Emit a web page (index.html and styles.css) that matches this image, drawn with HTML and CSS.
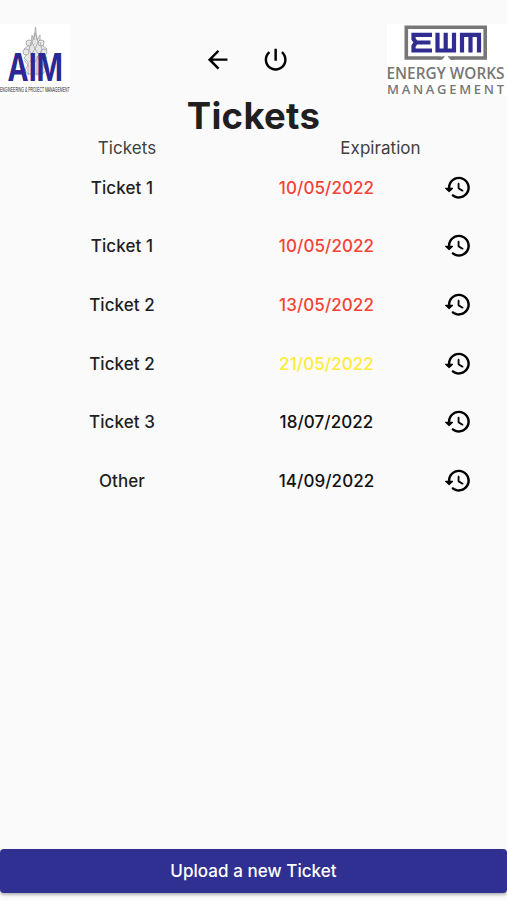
FILE: index.html
```html
<!DOCTYPE html>
<html lang="en">
<head>
<meta charset="utf-8">
<title>Tickets</title>
<link rel="stylesheet" href="styles.css">
</head>
<body>
<svg class="defs" width="0" height="0" aria-hidden="true">
  <symbol id="history" viewBox="0 0 24 24"><path d="M13.26 3C8.17 2.86 4 6.95 4 12H2.21c-.45 0-.67.54-.35.85l2.79 2.8c.2.2.51.2.71 0l2.79-2.8c.31-.31.09-.85-.36-.85H6c0-3.9 3.18-7.05 7.1-7 3.72.05 6.85 3.18 6.9 6.9.05 3.91-3.1 7.1-7 7.1-1.61 0-3.1-.55-4.28-1.48-.4-.31-.96-.28-1.32.08-.42.42-.39 1.13.08 1.49C9 20.29 10.91 21 13 21c5.05 0 9.14-4.17 9-9.26-.13-4.69-4.05-8.61-8.74-8.74zm-.51 5c-.41 0-.75.34-.75.75v3.68c0 .35.19.68.49.86l3.12 1.85c.36.21.82.09 1.03-.26.21-.36.09-.82-.26-1.03l-2.88-1.71v-3.4c0-.4-.34-.74-.75-.74z"/></symbol>
</svg>
<div class="screen">
  <header class="top">
    <svg class="logo-aim" viewBox="0 0 72 72" role="img" aria-label="AIM">
      <rect width="70" height="72" fill="#fff"/>
      <g fill="#e6e6e6" stroke="#999" stroke-width=".7">
        <path d="M28 50V38l-4-4 3-4-3-5 4-3-1-5 4 1 1-7 2 5 1.500-13 1.500 13 3-5 0 7 4-1-1 5 4 3-3 5 3 4-4 4v12z"/>
        <circle cx="29" cy="19" r="3"/><circle cx="41" cy="19" r="3"/>
        <circle cx="26" cy="28" r="3"/><circle cx="44" cy="28" r="3"/>
        <path d="M35 9l-3 9 3 7 3-7zM35 25l-4 6 4 7 4-7zM31 18l-2 8 4 6M40 18l2 8-4 6M30 38l4-6v20M41 38l-4-6v20M24 36l4 5-3 5 4 5M47 36l-4 5 3 5-4 5" fill="none"/>
      </g>
      <text class="aim-name" transform="translate(7.500 56.500) scale(.745 1)">AIM</text>
      <text class="aim-sub" x="0" y="68" textLength="69.500" lengthAdjust="spacingAndGlyphs">ENGINEERING &amp; PROJECT MANAGEMENT</text>
    </svg>
    <nav class="actions">
      <svg class="icon" viewBox="0 0 24 24"><path d="M20 11H7.83l5.59-5.59L12 4l-8 8 8 8 1.41-1.41L7.83 13H20v-2z"/></svg>
      <svg class="icon" viewBox="0 0 24 24"><path d="M13 3h-2v10h2V3zm4.83 2.17l-1.42 1.42C17.99 7.86 19 9.81 19 12c0 3.87-3.13 7-7 7s-7-3.13-7-7c0-2.19 1.01-4.14 2.58-5.42L6.17 5.17C4.23 6.82 3 9.26 3 12c0 4.97 4.03 9 9 9s9-4.03 9-9c0-2.74-1.23-5.18-3.17-6.83z"/></svg>
    </nav>
    <svg class="logo-ewm" viewBox="0 0 120 72" role="img" aria-label="EWM">
      <rect width="120" height="72" fill="#fff"/>
      <path d="M54 34H19.300V3.200H98.200V34H64" fill="none" stroke="#777" stroke-width="3.600"/>
      <path d="M50.500 35.800L55 32.200H58L55 35.800zM68 35.800L63.500 32.200H60.500L63.500 35.800z" fill="#777"/>
      <g fill="none" stroke="#302c92" stroke-width="4.200">
        <path d="M45 10.800H26.500V15L29 18.500L26.500 22V26.500H45M27 18.500H43.500"/>
        <path d="M50.500 8.700V26.500H67V8.700M58.700 8.700V26.500"/>
        <path d="M75 28.600V10.800H92V28.600M83.500 10.800V28.600"/>
      </g>
      <text class="ewm-name" x="-.5" y="54.500" textLength="118" lengthAdjust="spacingAndGlyphs">ENERGY WORKS</text>
      <text class="ewm-sub" x="0" y="69.500" textLength="117">MANAGEMENT</text>
    </svg>
  </header>
  <h1 class="title">Tickets</h1>
  <div class="heads"><span>Tickets</span><span>Expiration</span></div>
  <main class="list">
    <div class="row"><span class="name">Ticket 1</span><span class="date expired">10/05/2022</span><svg class="icon"><use href="#history"/></svg></div>
    <div class="row"><span class="name">Ticket 1</span><span class="date expired">10/05/2022</span><svg class="icon"><use href="#history"/></svg></div>
    <div class="row"><span class="name">Ticket 2</span><span class="date expired">13/05/2022</span><svg class="icon"><use href="#history"/></svg></div>
    <div class="row"><span class="name">Ticket 2</span><span class="date soon">21/05/2022</span><svg class="icon"><use href="#history"/></svg></div>
    <div class="row"><span class="name">Ticket 3</span><span class="date">18/07/2022</span><svg class="icon"><use href="#history"/></svg></div>
    <div class="row"><span class="name">Other</span><span class="date">14/09/2022</span><svg class="icon"><use href="#history"/></svg></div>
  </main>
  <button class="upload">Upload a new Ticket</button>
</div>
</body>
</html>
```

FILE: styles.css
```css
* { box-sizing: border-box; }
body { margin: 0; background: #fafafa; font-family: Inter, "Liberation Sans", sans-serif; color: #1f1f1f; }
.defs { display: none; }
.screen { height: 900px; display: flex; flex-direction: column; padding: 24px 0 7.500px; overflow: hidden; }
.top { display: flex; justify-content: space-between; height: 72px; flex: none; }
.logo-aim { width: 72px; height: 72px; }
.logo-ewm { width: 120px; height: 72px; }
.aim-name { font: 700 38px Inter, sans-serif; fill: #2b2894; }
.aim-sub { font: 400 8px "Liberation Sans", sans-serif; fill: #222; }
.ewm-name { font: 600 15.500px "Open Sans", sans-serif; fill: #777; }
.ewm-sub { font: 600 13px "Open Sans", sans-serif; fill: #777; }
.actions { display: flex; align-items: center; gap: 29.300px; margin-left: 34px; }
.icon { width: 29.300px; height: 29.300px; fill: #000; display: block; }
.title { margin: 0; height: 40px; line-height: 41px; text-align: center; font-size: 36.500px; font-weight: 700; letter-spacing: .3px; flex: none; }
.heads { display: grid; grid-template-columns: 1fr 1fr; height: 22px; line-height: 24px; text-align: center; font-size: 17px; letter-spacing: .05px; color: #404040; flex: none; }
.heads span { padding-left: .5px; }
.list { flex: 1; }
.row { display: grid; grid-template-columns: 244px 164px 99px; height: 58.670px; align-items: center; justify-items: center; font-size: 17px; font-weight: 500; letter-spacing: .08px; }
.name, .date { padding-top: 1px; }
.date { color: #111; padding-left: 1px; }
.expired { color: #f44336; }
.soon { color: #ffeb3b; }
.upload { height: 43.500px; flex: none; border: 0; border-radius: 4px; background: #303092; color: #fff; font: 500 17px Inter, sans-serif; letter-spacing: .05px; box-shadow: 0 2px 3px rgba(0,0,0,.28); }
```
